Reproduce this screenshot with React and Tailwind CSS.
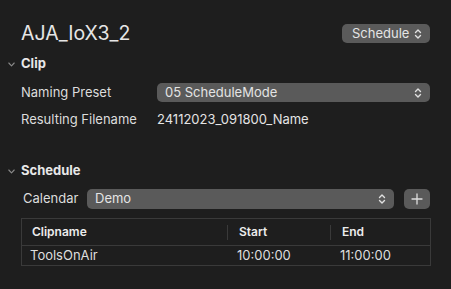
import React from 'react';

const UpDown = () => (
    <svg width="8" height="12" viewBox="0 0 8 12" fill="none" stroke="currentColor" strokeWidth="1.4" strokeLinecap="round" strokeLinejoin="round">
        <path d="M1.5 4.5 L4 2 L6.5 4.5" />
        <path d="M1.5 7.5 L4 10 L6.5 7.5" />
    </svg>
);

const Chevron = () => (
    <svg width="7" height="5" viewBox="0 0 7 5" fill="none" stroke="currentColor" strokeWidth="1.1" strokeLinecap="round" strokeLinejoin="round">
        <path d="M0.8 1 L3.5 3.8 L6.2 1" />
    </svg>
);

const Popup = ({ label, className }) => (
    <div className={`flex items-center justify-between rounded-[5px] bg-[#5a5a5a] text-[13px] text-[#e4e4e4] pl-[8px] pr-[8px] ${className}`}>
        <span>{label}</span>
        <span className="text-[#e0e0e0]"><UpDown /></span>
    </div>
);

const SectionHeader = ({ title, className }) => (
    <div className={`flex items-center h-[18px] ${className}`}>
        <span className="w-[21px] pl-[8px] text-[#8a8a8a] flex items-center"><Chevron /></span>
        <span className="text-[13px] font-bold text-[#e8e8e8]">{title}</span>
    </div>
);

export default function App() {
    return (
        <div className="w-[451px] h-[289px] bg-[#1e1e1e] pt-[24px] overflow-hidden" style={{ fontFamily: 'Inter, "Liberation Sans", sans-serif' }}>
            {/* Titel */}
            <div className="flex items-center justify-between pl-[21px] pr-[21px] h-[19px]">
                <span className="text-[19.5px] text-[#e6e6e6] leading-none">AJA_IoX3_2</span>
                <Popup label="Schedule" className="w-[88px] h-[19px] pl-[10px]" />
            </div>

            {/* Clip */}
            <SectionHeader title="Clip" className="mt-[12px]" />
            <div className="flex items-center h-[19px] mt-[10px] pl-[21px] pr-[21px]">
                <span className="w-[136px] text-[13px] text-[#dcdcdc]">Naming Preset</span>
                <Popup label="05 ScheduleMode" className="flex-1 h-[19px]" />
            </div>
            <div className="flex items-center h-[18px] mt-[9px] pl-[21px]">
                <span className="w-[136px] text-[13px] text-[#dcdcdc]">Resulting Filename</span>
                <span className="text-[13px] text-[#e4e4e4]">24112023_091800_Name</span>
            </div>

            {/* Schedule */}
            <SectionHeader title="Schedule" className="mt-[33px]" />
            <div className="flex items-center h-[20px] mt-[9px] pl-[23px] pr-[21px]">
                <span className="w-[64px] text-[13px] text-[#dcdcdc]">Calendar</span>
                <Popup label="Demo" className="w-[307px] h-[20px]" />
                <button className="ml-[10px] w-[26px] h-[20px] rounded-[5px] bg-[#5a5a5a] flex items-center justify-center text-[#dedede]">
                    <svg width="12" height="12" viewBox="0 0 12 12" stroke="currentColor" strokeWidth="1.3" strokeLinecap="round">
                        <path d="M6 1 V11 M1 6 H11" />
                    </svg>
                </button>
            </div>

            <div className="ml-[21px] mt-[9px] w-[410px] border border-[#3a3a3a]">
                <div className="flex h-[27px] items-center border-b border-[#3a3a3a] text-[12px] font-semibold text-[#ececec]">
                    <div className="w-[205px] pl-[10px]">Clipname</div>
                    <div className="w-[1px] h-[15px] bg-[#3a3a3a]" />
                    <div className="w-[102px] pl-[11px]">Start</div>
                    <div className="w-[1px] h-[15px] bg-[#3a3a3a]" />
                    <div className="flex-1 pl-[11px]">End</div>
                </div>
                <div className="flex h-[19px] items-center text-[13px] text-[#dedede]">
                    <div className="w-[206px] pl-[8px]">ToolsOnAir</div>
                    <div className="w-[103px] pl-[9px]">10:00:00</div>
                    <div className="flex-1 pl-[9px]">11:00:00</div>
                </div>
            </div>
        </div>
    );
}
